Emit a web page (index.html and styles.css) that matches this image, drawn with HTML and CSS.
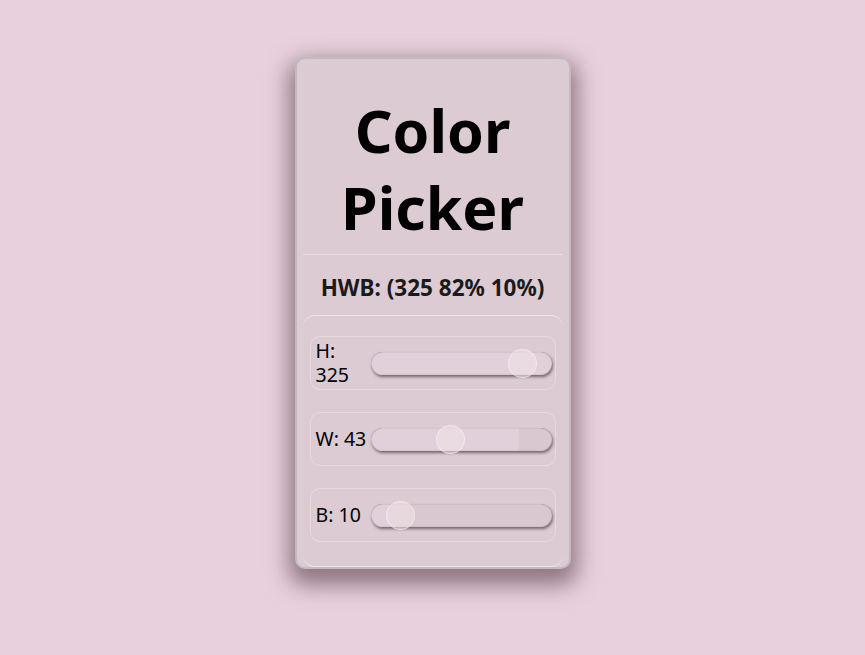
FILE: index.html
```html
<!DOCTYPE html>
<html lang="en">
<head>
    <meta charset="UTF-8">
    <meta name="viewport" content="width=device-width, initial-scale=1.0">
    <title>Color Picker</title>
    <link rel="stylesheet" href="styles.css">
</head>
<body>
    <main class="picker">
        <h1 class="picker-title">Color Picker</h1>
        <p class="picker-value">HWB: (325 82% 10%)</p>
        <section class="sliders">
            <label class="slider-row">
                <span class="slider-label">H: 325</span>
                <input class="slider" type="range" min="0" max="360" value="325" style="--fill: 100%">
            </label>
            <label class="slider-row">
                <span class="slider-label">W: 43</span>
                <input class="slider" type="range" min="0" max="100" value="43" style="--fill: 82%">
            </label>
            <label class="slider-row">
                <span class="slider-label">B: 10</span>
                <input class="slider" type="range" min="0" max="100" value="10" style="--fill: 10%">
            </label>
        </section>
    </main>
</body>
</html>
```

FILE: styles.css
```css
html {
    background: #e8d1dd;
}
body {
    font-family: 'Noto Sans', 'Open Sans', sans-serif;
    margin: 0;
    padding: 57px 0 90px;
    min-height: 100vh;
    box-sizing: border-box;
    background: #e8d1dd;
    color: #000;
}
.picker {
    width: 260px;
    margin: 0 auto;
    padding: 0 6px;
    background: #dccbd3;
    border: 2px solid #c6b8bf;
    border-radius: 10px;
    box-shadow: 0 10px 22px 6px rgba(70, 40, 55, 0.55);
}
.picker-title {
    margin: 0;
    padding: 33px 0 8px;
    font-size: 59px;
    line-height: 77px;
    font-weight: 700;
    text-align: center;
    border-bottom: 1px solid rgba(255, 255, 255, 0.35);
}
.picker-value {
    margin: 0;
    padding: 19px 0 13px;
    font-size: 22.5px;
    line-height: 28px;
    font-weight: 700;
    text-align: center;
    color: #1a1a1a;
}
.sliders {
    display: flex;
    flex-direction: column;
    gap: 22px;
    padding: 20px 7px 24px;
    border-top: 1px solid rgba(255, 255, 255, 0.55);
    border-bottom: 1px solid rgba(255, 255, 255, 0.55);
    border-radius: 12px;
}
.slider-row {
    display: flex;
    align-items: center;
    height: 52px;
    padding: 0 3px 0 5px;
    border: 1px solid rgba(255, 255, 255, 0.3);
    border-radius: 10px;
}
.slider-label {
    width: 55px;
    flex: none;
    font-size: 19.5px;
    line-height: 24px;
}
.slider {
    -webkit-appearance: none;
    appearance: none;
    flex: 1;
    min-width: 0;
    height: 23px;
    margin: 0;
    border-radius: 12px;
    background: linear-gradient(90deg, #e1cfd9 var(--fill), #d9c8d0 var(--fill));
    box-shadow: 1px 2px 3px rgba(40, 20, 30, 0.55), inset 0 0 1px rgba(40, 20, 30, 0.6);
    outline: none;
}
.slider::-webkit-slider-thumb {
    -webkit-appearance: none;
    width: 29px;
    height: 29px;
    border-radius: 50%;
    background: rgba(240, 230, 232, 0.55);
    border: 1px solid rgba(255, 255, 255, 0.35);
    cursor: pointer;
}
```
